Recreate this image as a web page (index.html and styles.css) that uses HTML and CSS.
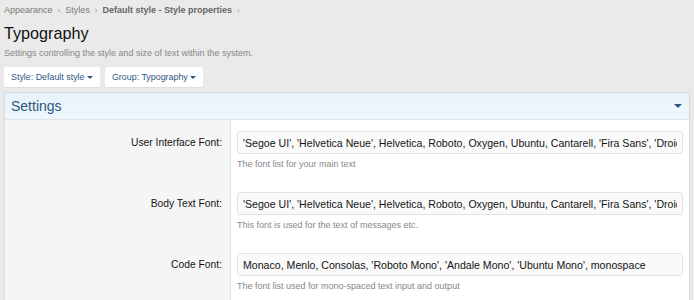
FILE: index.html
```html
<html>
    <head>
        <meta name="viewport" content="width=device-width, initial-scale=1.0">
        <link rel="stylesheet" href="styles.css">
    </head>
    <body>
        <div class="crumbs">
            <a>Appearance</a><span class="sep">›</span><a>Styles</a><span class="sep">›</span><a class="strong">Default style - Style properties</a><span class="sep">›</span>
        </div>
        <h1>Typography</h1>
        <div class="desc">Settings controlling the style and size of text within the system.</div>

        <div class="filters">
            <div class="menu-btn">Style: Default style <span class="caret"></span></div>
            <div class="menu-btn">Group: Typography <span class="caret"></span></div>
        </div>

        <div class="block">
            <div class="block-header">
                <span>Settings</span>
                <span class="caret big"></span>
            </div>
            <div class="block-body">
                <div class="row">
                    <label for="ui-font">User Interface Font:</label>
                    <div class="field">
                        <input type="text" id="ui-font" value="'Segoe UI', 'Helvetica Neue', Helvetica, Roboto, Oxygen, Ubuntu, Cantarell, 'Fira Sans', 'Droid Sans', sans-serif">
                        <div class="hint">The font list for your main text</div>
                    </div>
                </div>
                <div class="row">
                    <label for="body-font">Body Text Font:</label>
                    <div class="field">
                        <input type="text" id="body-font" value="'Segoe UI', 'Helvetica Neue', Helvetica, Roboto, Oxygen, Ubuntu, Cantarell, 'Fira Sans', 'Droid Sans', sans-serif">
                        <div class="hint">This font is used for the text of messages etc.</div>
                    </div>
                </div>
                <div class="row">
                    <label for="code-font">Code Font:</label>
                    <div class="field">
                        <input type="text" id="code-font" value="Monaco, Menlo, Consolas, 'Roboto Mono', 'Andale Mono', 'Ubuntu Mono', monospace">
                        <div class="hint">The font list used for mono-spaced text input and output</div>
                    </div>
                </div>
            </div>
        </div>
    </body>
</html>
```

FILE: styles.css
```css
html, body {
    margin: 0;
    padding: 0;
    font-family: "Liberation Sans", Arial, sans-serif;
    font-size: 10.3px;
    color: #141414;
    background: #eaeaea;
}
body {
    padding: 0 4px;
    overflow: hidden;
}
.crumbs {
    padding-top: 4px;
    font-size: 9px;
    line-height: 12px;
    color: #7a7a7a;
}
.crumbs .strong {
    font-weight: bold;
    color: #666;
}
.crumbs .sep {
    margin: 0 5px;
    font-size: 8px;
    color: #999;
}
h1 {
    margin: 6px 0 0 0;
    font-size: 16.2px;
    font-weight: normal;
    line-height: 20px;
    color: #111;
}
.desc {
    font-size: 9px;
    color: #888;
    margin-top: 4px;
    line-height: 12px;
}
.filters {
    display: flex;
    gap: 5px;
    margin-top: 8px;
}
.menu-btn {
    background: #fff;
    color: #2d5680;
    font-size: 8.9px;
    line-height: 20px;
    padding: 0 7px;
    border-radius: 2px;
    box-shadow: 0 1px 1px rgba(0,0,0,0.06);
}
.caret {
    display: inline-block;
    width: 0;
    height: 0;
    border-left: 3px solid transparent;
    border-right: 3px solid transparent;
    border-top: 3px solid #2d5680;
    vertical-align: middle;
    margin-left: 0;
}
.caret.big {
    border-left-width: 4px;
    border-right-width: 4px;
    border-top-width: 4px;
    margin-right: 1px;
}
.block {
    margin-top: 5px;
    width: 686px;
    border: 1px solid #dadada;
    border-bottom: none;
    box-sizing: border-box;
}
.block-header {
    display: flex;
    justify-content: space-between;
    align-items: center;
    height: 26px;
    padding: 0 6px;
    background: linear-gradient(#e8f2fc, #f0f7fd);
    border-bottom: 1px solid #dde6ee;
    color: #2d5680;
    font-size: 14px;
}
.block-body {
    background: linear-gradient(to right, #f5f5f5 225px, #fff 225px);
}
.row {
    display: flex;
    height: 61px;
}
.row label {
    width: 217px;
    flex: none;
    text-align: right;
    padding-top: 11px;
    line-height: 23px;
    border-right: 1px solid #e3e3e3;
    padding-right: 8px;
}
.field {
    flex: 1;
    padding: 11px 6px 0 6px;
}
input {
    display: block;
    width: 100%;
    height: 23px;
    box-sizing: border-box;
    border: 1px solid #e2e2e2;
    border-radius: 3px;
    background: #fafafa;
    font-family: "Liberation Sans", Arial, sans-serif;
    font-size: 10.6px;
    color: #141414;
    padding: 0 5px;
    outline: none;
}
.hint {
    font-size: 9px;
    line-height: 12px;
    color: #888;
    margin-top: 4px;
}
```
